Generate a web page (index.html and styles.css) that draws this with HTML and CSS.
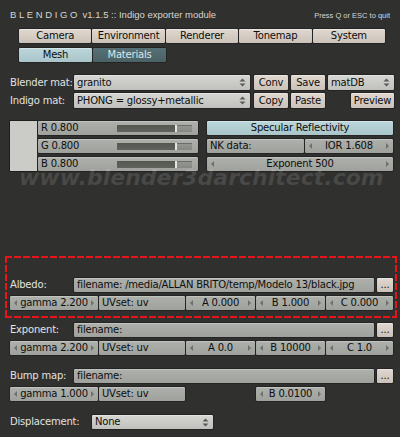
FILE: index.html
```html
<!DOCTYPE html>
<html>
<head>
<meta charset="utf-8">
<link rel="stylesheet" href="styles.css">
</head>
<body>
<div class="page">
  <div class="head">
    <span class="title"><span class="logo">BLENDIGO</span> v1.1.5 :: Indigo exporter module</span>
    <span class="quit">Press Q or ESC to quit</span>
  </div>

  <div class="tabs grp">
    <div class="btn beige">Camera</div>
    <div class="btn beige">Environment</div>
    <div class="btn beige">Renderer</div>
    <div class="btn beige">Tonemap</div>
    <div class="btn beige">System</div>
  </div>
  <div class="tabs2 grp">
    <div class="btn mesh">Mesh</div>
    <div class="btn mats">Materials</div>
  </div>

  <div class="row matrow r1">
    <span class="lbl lbl-mat">Blender mat:</span>
    <div class="btn drop drop-mat"><span class="dtxt">granito</span><svg class="ud" width="7" height="9" viewBox="0 0 7 9"><polygon points="0.5,3.5 3.5,0.5 6.5,3.5"/><polygon points="0.5,5.5 3.5,8.5 6.5,5.5"/></svg></div>
    <div class="btn beige b-conv">Conv</div>
    <div class="btn beige b-save">Save</div>
    <div class="btn drop b-db"><span class="dtxt">matDB</span><svg class="ud" width="7" height="9" viewBox="0 0 7 9"><polygon points="0.5,3.5 3.5,0.5 6.5,3.5"/><polygon points="0.5,5.5 3.5,8.5 6.5,5.5"/></svg></div>
  </div>
  <div class="row matrow r2">
    <span class="lbl lbl-mat">Indigo mat:</span>
    <div class="btn drop drop-mat"><span class="dtxt">PHONG = glossy+metallic</span><svg class="ud" width="7" height="9" viewBox="0 0 7 9"><polygon points="0.5,3.5 3.5,0.5 6.5,3.5"/><polygon points="0.5,5.5 3.5,8.5 6.5,5.5"/></svg></div>
    <div class="btn beige b-conv">Copy</div>
    <div class="btn beige b-save">Paste</div>
    <div class="btn beige b-prev">Preview</div>
  </div>

  <div class="colorblock">
    <div class="swatch"></div>
    <div class="sliders">
      <div class="btn field slider"><span class="stxt">R 0.800</span><span class="track"><span class="fill" style="width:80%"></span></span></div>
      <div class="btn field slider"><span class="stxt">G 0.800</span><span class="track"><span class="fill" style="width:80%"></span></span></div>
      <div class="btn field slider"><span class="stxt">B 0.800</span><span class="track"><span class="fill" style="width:80%"></span></span></div>
    </div>
    <div class="rcol">
      <div class="btn spec">Specular Reflectivity</div>
      <div class="grp nkrow">
        <div class="btn field nk">NK data:</div>
        <div class="btn field num ior"><span class="al"></span><span class="ntxt">IOR 1.608</span><span class="ar"></span></div>
      </div>
      <div class="btn field num expo"><span class="al"></span><span class="ntxt">Exponent 500</span><span class="ar"></span></div>
    </div>
  </div>

  <div class="redbox">
    <div class="row frow">
      <span class="lbl lbl-sec">Albedo:</span>
      <div class="btn field fname">filename: /media/ALLAN BRITO/temp/Modelo 13/black.jpg</div>
      <div class="btn beige dots">...</div>
    </div>
    <div class="grp nrow">
      <div class="btn field num w-g"><span class="al"></span><span class="ntxt">gamma 2.200</span><span class="ar"></span></div>
      <div class="btn field w-uv">UVset: uv</div>
      <div class="btn field num w-a"><span class="al"></span><span class="ntxt">A 0.000</span><span class="ar"></span></div>
      <div class="btn field num w-b"><span class="al"></span><span class="ntxt">B 1.000</span><span class="ar"></span></div>
      <div class="btn field num w-c"><span class="al"></span><span class="ntxt">C 0.000</span><span class="ar"></span></div>
    </div>
  </div>

  <div class="row frow sec-exp">
    <span class="lbl lbl-sec">Exponent:</span>
    <div class="btn field fname">filename:</div>
    <div class="btn beige dots">...</div>
  </div>
  <div class="grp nrow">
    <div class="btn field num w-g"><span class="al"></span><span class="ntxt">gamma 2.200</span><span class="ar"></span></div>
    <div class="btn field w-uv">UVset: uv</div>
    <div class="btn field num w-a"><span class="al"></span><span class="ntxt">A 0.0</span><span class="ar"></span></div>
    <div class="btn field num w-b"><span class="al"></span><span class="ntxt">B 10000</span><span class="ar"></span></div>
    <div class="btn field num w-c"><span class="al"></span><span class="ntxt">C 1.0</span><span class="ar"></span></div>
  </div>

  <div class="row frow sec-bump">
    <span class="lbl lbl-sec">Bump map:</span>
    <div class="btn field fname">filename:</div>
    <div class="btn beige dots">...</div>
  </div>
  <div class="grp nrow">
    <div class="btn field num w-g"><span class="al"></span><span class="ntxt">gamma 1.000</span><span class="ar"></span></div>
    <div class="btn field w-uv">UVset: uv</div>
    <div class="blank w-a"></div>
    <div class="btn field num w-b"><span class="al"></span><span class="ntxt">B 0.0100</span><span class="ar"></span></div>
  </div>

  <div class="row disprow">
    <span class="lbl lbl-disp">Displacement:</span>
    <div class="btn drop drop-disp"><span class="dtxt">None</span><svg class="ud" width="7" height="9" viewBox="0 0 7 9"><polygon points="0.5,3.5 3.5,0.5 6.5,3.5"/><polygon points="0.5,5.5 3.5,8.5 6.5,5.5"/></svg></div>
  </div>

  <div class="watermark">www.blender3darchitect.com</div>
</div>
</body>
</html>
```
FILE: styles.css
```css
html, body {
  margin: 0;
  padding: 0;
  background: #30302e;
}
.page {
  position: relative;
  width: 400px;
  height: 437px;
  overflow: hidden;
  background: #30302e;
  font-family: "DejaVu Sans", sans-serif;
  font-size: 10px;
  letter-spacing: -0.2px;
  color: #0e0e0e;
}
.head {
  box-sizing: border-box;
  height: 28px;
  padding: 9px 10px 0 10px;
  display: flex;
  justify-content: space-between;
  align-items: baseline;
  font-family: "Liberation Sans", sans-serif;
  letter-spacing: 0;
  color: #d6d6d4;
}
.title {
  font-size: 9.5px;
  line-height: 11px;
  white-space: nowrap;
}
.logo {
  letter-spacing: 2.6px;
}
.quit {
  font-size: 7.5px;
  line-height: 11px;
  white-space: nowrap;
}

/* generic button */
.btn {
  box-sizing: border-box;
  height: 16px;
  border: 1px solid #242424;
  border-radius: 2px;
  line-height: 14px;
  text-align: center;
  white-space: nowrap;
  overflow: hidden;
  box-shadow: inset 0 1px 0 rgba(255,255,255,0.35);
}
.beige {
  background: linear-gradient(#e0d8d0, #cbc2b9);
}
.mesh {
  background: linear-gradient(#bcd7db, #a9c5c9);
}
.mats {
  background: linear-gradient(#577075, #4a6266);
  color: #dde6e6;
  box-shadow: none;
}
.drop {
  display: flex;
  align-items: center;
  text-align: left;
  padding: 0 4px 0 3px;
  background: linear-gradient(#d6d7d3, #c0c1bd);
}
.dtxt {
  flex: 1;
  overflow: hidden;
}
.ud {
  fill: #5a5b58;
  flex: none;
}
.field {
  background: linear-gradient(#adb0ab, #9ea19c);
  box-shadow: inset 0 1px 0 rgba(255,255,255,0.25);
  text-align: left;
  padding: 0 3px;
}
.spec {
  background: linear-gradient(#bcd7db, #a9c5c9);
}

/* groups of joined buttons */
.grp {
  display: flex;
}
.grp > * + * {
  margin-left: -1px;
}

/* number fields with arrows */
.num {
  display: flex;
  align-items: center;
  padding: 0 4px;
}
.ntxt {
  flex: 1;
  text-align: center;
}
.al, .ar {
  flex: none;
  width: 0;
  height: 0;
  border-top: 3px solid transparent;
  border-bottom: 3px solid transparent;
}
.al {
  border-right: 3px solid #6e706c;
}
.ar {
  border-left: 3px solid #6e706c;
}

/* tabs */
.tabs {
  margin-left: 18px;
  width: 368px;
}
.tabs > .btn {
  flex: 1;
}
.tabs2 {
  margin: 3px 0 0 18px;
}
.tabs2 > .btn {
  width: 75px;
}

/* rows */
.row {
  display: flex;
  align-items: center;
}
.lbl {
  color: #e2e2e0;
  white-space: nowrap;
  line-height: 14px;
}
.matrow > .btn {
  height: 17px;
  line-height: 15px;
}
.r1 {
  margin: 11px 0 0 10px;
}
.r2 {
  margin: 1px 0 0 10px;
}
.lbl-mat {
  width: 63px;
}
.drop-mat {
  width: 178px;
}
.b-conv {
  width: 36px;
  margin-left: 2px;
}
.b-save {
  width: 36px;
  margin-left: 1px;
}
.b-db {
  width: 68px;
  margin-left: 1px;
}
.b-prev {
  width: 45px;
  margin-left: 24px;
}

/* color block */
.colorblock {
  display: flex;
  margin: 11px 0 0 9px;
}
.swatch {
  box-sizing: border-box;
  width: 28px;
  height: 52px;
  background: #cbccc8;
  border: 1px solid #1e1e1e;
  border-right: none;
}
.sliders {
  width: 162px;
  display: flex;
  flex-direction: column;
  gap: 2px;
}
.slider {
  display: flex;
  align-items: center;
  padding: 0 6px 0 3px;
}
.stxt {
  flex: 1;
}
.track {
  display: block;
  width: 75px;
  height: 7px;
  background: linear-gradient(#969894, #868884);
  box-shadow: inset 0 1px 0 #6b6d69;
}
.fill {
  display: block;
  height: 7px;
  box-sizing: border-box;
  background: linear-gradient(#55574f, #60625e);
  border-right: 2px solid #e4e4e2;
}
.rcol {
  width: 188px;
  margin-left: 7px;
  display: flex;
  flex-direction: column;
  gap: 2px;
}
.nk {
  width: 99px;
}
.ior {
  width: 90px;
}
.expo {
  width: 188px;
}

/* red highlight box */
.redbox {
  box-sizing: border-box;
  width: 392px;
  height: 62px;
  margin: 84px 0 0 5px;
  padding: 21px 0 0 0;
  background:
    repeating-linear-gradient(90deg, #e8141a 0 7px, transparent 7px 9px) top left / 100% 2px no-repeat,
    repeating-linear-gradient(90deg, #e8141a 0 7px, transparent 7px 9px) bottom left / 100% 2px no-repeat,
    repeating-linear-gradient(180deg, #e8141a 0 7px, transparent 7px 9px) top left / 2px 100% no-repeat,
    repeating-linear-gradient(180deg, #e8141a 0 7px, transparent 7px 9px) top right / 2px 100% no-repeat;
}
.redbox .frow {
  margin-left: 5px;
}
.redbox .nrow {
  margin-left: 4px;
}

/* file rows */
.frow {
  margin-left: 10px;
}
.lbl-sec {
  width: 63px;
}
.fname {
  width: 302px;
}
.dots {
  width: 18px;
  margin-left: 1px;
  line-height: 13px;
}
.nrow {
  margin: 2px 0 0 9px;
}
.w-g { width: 90px; }
.w-uv { width: 88px; }
.w-a { width: 71px; }
.w-b { width: 71px; }
.w-c { width: 69px; }
.blank {
  height: 16px;
}
.sec-exp {
  margin-top: 4px;
}
.sec-bump {
  margin-top: 12px;
}
.disprow {
  margin: 12px 0 0 10px;
}
.lbl-disp {
  width: 81px;
}
.drop-disp {
  width: 123px;
}

/* watermark overlay */
.watermark {
  position: absolute;
  left: 19px;
  top: 172px;
  font-family: "DejaVu Sans", sans-serif;
  font-weight: bold;
  font-style: italic;
  font-size: 22px;
  line-height: 12px;
  letter-spacing: 0;
  color: rgba(255,255,255,0.12);
  white-space: nowrap;
  pointer-events: none;
}
```
